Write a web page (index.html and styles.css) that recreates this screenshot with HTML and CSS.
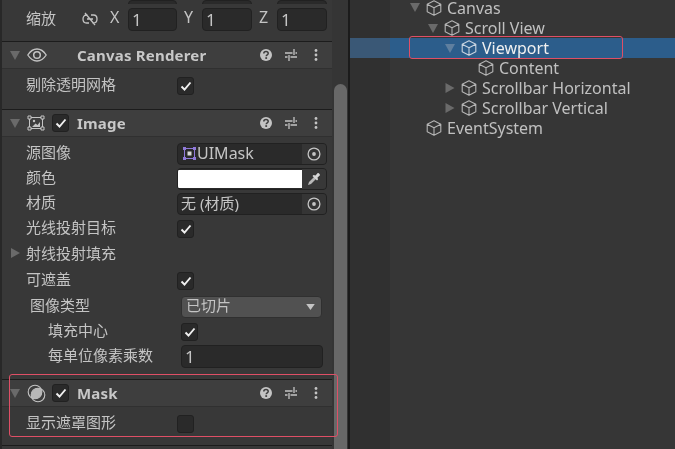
FILE: index.html
```html
<!DOCTYPE html>
<html lang="zh-CN">
<head>
<meta charset="utf-8">
<title>Inspector</title>
<link rel="stylesheet" href="styles.css">
</head>
<body>
<svg class="defs" width="0" height="0" aria-hidden="true">
  <symbol id="cube" viewBox="0 0 16 16"><path d="M8 .8 14.800 4.200V11.800L8 15.200 1.200 11.800V4.200ZM1.200 4.200 8 7.800 14.800 4.200M8 7.800V15.200" fill="none" stroke="currentColor" stroke-width="1.100" stroke-linejoin="round"/></symbol>
  <symbol id="check" viewBox="0 0 12 12"><path d="M1.500 6.500 4.500 9.500 10.500 2.500" fill="none" stroke="#f0f0f0" stroke-width="1.900"/></symbol>
  <symbol id="help" viewBox="0 0 12 12"><circle cx="6" cy="6" r="6" fill="#c4c4c4"/><path d="M3.800 4.600C3.800 3.300 4.800 2.600 6 2.600 7.300 2.600 8.200 3.400 8.200 4.400 8.200 5.900 6.200 5.900 6.200 7.300" fill="none" stroke="#3e3e3e" stroke-width="1.500"/><rect x="5.300" y="8.200" width="1.800" height="1.700" fill="#3e3e3e"/></symbol>
  <symbol id="sliders" viewBox="0 0 12 12"><path d="M0 4H7.500M10.500 4H12M0 8H2.500M5.500 8H12M9 0V6M4 6V12" fill="none" stroke="#c4c4c4" stroke-width="1.300"/></symbol>
  <symbol id="dots" viewBox="0 0 4 12"><circle cx="2" cy="1.500" r="1.400" fill="#c4c4c4"/><circle cx="2" cy="6" r="1.400" fill="#c4c4c4"/><circle cx="2" cy="10.500" r="1.400" fill="#c4c4c4"/></symbol>
  <symbol id="target" viewBox="0 0 14 14"><circle cx="7" cy="7" r="5.900" fill="none" stroke="#c4c4c4" stroke-width="1.300"/><circle cx="7" cy="7" r="1.900" fill="#c4c4c4"/></symbol>
</svg>

<div class="app">
  <main class="inspector">
    <div class="xyz-row xyz-top">
      <span></span><span></span><span></span><div class="field"></div><span></span><div class="field"></div><span></span><div class="field"></div>
    </div>
    <div class="xyz-row xyz-scale">
      <span class="label">缩放</span>
      <svg class="link" width="16" height="14" viewBox="0 0 16 14"><path d="M5.500 3H4.500C2.500 3 1 4.500 1 7S2.500 11 4.500 11H7M9 3H11.500C13.500 3 15 4.500 15 7S13.500 11 11.500 11H10.500M5 7H11M3 1 13 13" fill="none" stroke="#c4c4c4" stroke-width="1.300"/></svg>
      <span class="axis">X</span><div class="field">1</div>
      <span class="axis axis-gap">Y</span><div class="field">1</div>
      <span class="axis axis-gap">Z</span><div class="field">1</div>
    </div>

    <section class="component comp-canvas">
      <header class="comp-head">
        <svg class="tri" width="10" height="9" viewBox="0 0 10 9"><path d="M0 0H10L5 9Z" fill="#6a6a6a"/></svg>
        <svg class="comp-icon" width="20" height="14" viewBox="0 0 20 14"><path d="M.8 7C3.500 2.800 6.500 1 10 1S16.500 2.800 19.200 7C16.500 11.200 13.500 13 10 13S3.500 11.200 .8 7Z" fill="none" stroke="#c4c4c4" stroke-width="1.300"/><circle cx="10" cy="7" r="3.300" fill="none" stroke="#c4c4c4" stroke-width="1.500"/></svg>
        <span></span>
        <strong class="comp-title">Canvas Renderer</strong>
        <svg class="act" width="12" height="12"><use href="#help"/></svg>
        <svg class="act" width="12" height="12"><use href="#sliders"/></svg>
        <svg class="act act-dots" width="4" height="12"><use href="#dots"/></svg>
      </header>
      <div class="comp-body">
        <div class="row"><span class="label">剔除透明网格</span><span class="cb on"><svg width="12" height="12"><use href="#check"/></svg></span></div>
      </div>
    </section>

    <section class="component comp-image">
      <header class="comp-head">
        <svg class="tri" width="10" height="9" viewBox="0 0 10 9"><path d="M0 0H10L5 9Z" fill="#6a6a6a"/></svg>
        <svg class="comp-icon" width="18" height="16" viewBox="0 0 18 16"><path d="M2.500 2.500H15.500V13.500H2.500Z" fill="none" stroke="#c4c4c4"/><path d="M1 1H4V4H1ZM14 1H17V4H14ZM1 12H4V15H1ZM14 12H17V15H14Z" fill="#3e3e3e" stroke="#c4c4c4"/><path d="M5 12 8.500 8.500 10.500 10 13 7V12Z" fill="#c4c4c4"/><circle cx="7" cy="6" r="1.200" fill="#c4c4c4"/></svg>
        <span class="cb on"><svg width="12" height="12"><use href="#check"/></svg></span>
        <strong class="comp-title">Image</strong>
        <svg class="act" width="12" height="12"><use href="#help"/></svg>
        <svg class="act" width="12" height="12"><use href="#sliders"/></svg>
        <svg class="act act-dots" width="4" height="12"><use href="#dots"/></svg>
      </header>
      <div class="comp-body">
        <div class="row">
          <span class="label">源图像</span>
          <div class="objfield">
            <svg class="sprite" width="13" height="13" viewBox="0 0 13 13"><path d="M1.500 1.500H11.500V11.500H1.500Z" fill="none" stroke="#8f79d8"/><path d="M0 0H3V3H0ZM10 0H13V3H10ZM0 10H3V13H0ZM10 10H13V13H10Z" fill="#8f79d8"/><rect x="4.500" y="4.500" width="4" height="4" fill="#d8d8d8"/></svg>
            <span class="objtext">UIMask</span>
            <span class="objbtn"><svg width="14" height="14"><use href="#target"/></svg></span>
          </div>
        </div>
        <div class="row">
          <span class="label">颜色</span>
          <div class="colorfield">
            <span class="swatch"></span>
            <span class="dropper"><svg width="14" height="14" viewBox="0 0 14 14"><path d="M1 13 2 10 7.500 4.500 9.500 6.500 4 12Z" fill="#b8b8b8"/><path d="M6.500 3 8.500 3.500 10.500 1.200C11.500.4 13.600 2.500 12.800 3.500L10.500 5.500 11 7.500 10 8.500 5.500 4Z" fill="#d8d8d8"/></svg></span>
          </div>
        </div>
        <div class="row">
          <span class="label">材质</span>
          <div class="objfield">
            <span class="objtext objtext-plain">无 (材质)</span>
            <span class="objbtn"><svg width="14" height="14"><use href="#target"/></svg></span>
          </div>
        </div>
        <div class="row"><span class="label">光线投射目标</span><span class="cb on"><svg width="12" height="12"><use href="#check"/></svg></span></div>
        <div class="row row-tall">
          <span class="label label-fold"><svg class="fold" width="9" height="10" viewBox="0 0 9 10"><path d="M0 0 9 5 0 10Z" fill="#6a6a6a"/></svg>射线投射填充</span>
        </div>
        <div class="row row-taller"><span class="label">可遮盖</span><span class="cb on"><svg width="12" height="12"><use href="#check"/></svg></span></div>
        <div class="row row-sub">
          <span class="label">图像类型</span>
          <div class="dropdown"><span class="dropdown-text">已切片</span><svg width="9" height="6" viewBox="0 0 10 7"><path d="M0 0H10L5 7Z" fill="#c4c4c4"/></svg></div>
        </div>
        <div class="row row-sub2"><span class="label">填充中心</span><span class="cb on"><svg width="12" height="12"><use href="#check"/></svg></span></div>
        <div class="row row-sub2"><span class="label">每单位像素乘数</span><div class="field field-wide">1</div></div>
      </div>
    </section>

    <section class="component comp-mask">
      <header class="comp-head">
        <svg class="tri" width="10" height="9" viewBox="0 0 10 9"><path d="M0 0H10L5 9Z" fill="#6a6a6a"/></svg>
        <svg class="comp-icon" width="19" height="19" viewBox="0 0 19 19"><circle cx="8" cy="8" r="6.800" fill="none" stroke="#c4c4c4" stroke-width="1.100"/><circle cx="11" cy="11" r="6.800" fill="none" stroke="#c4c4c4" stroke-width="1.100"/><path d="M14.070 4.930A6.800 6.800 0 0 1 4.930 14.070 6.800 6.800 0 0 1 14.070 4.930Z" fill="#b8b8b8"/></svg>
        <span class="cb on"><svg width="12" height="12"><use href="#check"/></svg></span>
        <strong class="comp-title">Mask</strong>
        <svg class="act" width="12" height="12"><use href="#help"/></svg>
        <svg class="act" width="12" height="12"><use href="#sliders"/></svg>
        <svg class="act act-dots" width="4" height="12"><use href="#dots"/></svg>
      </header>
      <div class="comp-body">
        <div class="row"><span class="label">显示遮罩图形</span><span class="cb"></span></div>
      </div>
    </section>
    <div class="mark mark-mask"></div>
  </main>

  <aside class="scrollbar"><div class="thumb"></div></aside>

  <nav class="hierarchy">
    <div class="node d0 first"><svg class="exp" width="10" height="9" viewBox="0 0 10 9"><path d="M0 0H10L5 9Z" fill="#6a6a6a"/></svg><svg class="cube" width="16" height="16"><use href="#cube"/></svg><span>Canvas</span></div>
    <div class="node d1"><svg class="exp" width="10" height="9" viewBox="0 0 10 9"><path d="M0 0H10L5 9Z" fill="#6a6a6a"/></svg><svg class="cube" width="16" height="16"><use href="#cube"/></svg><span>Scroll View</span></div>
    <div class="node d2 selected"><svg class="exp" width="10" height="9" viewBox="0 0 10 9"><path d="M0 0H10L5 9Z" fill="#5f7f9f"/></svg><svg class="cube" width="16" height="16"><use href="#cube"/></svg><span>Viewport</span></div>
    <div class="node d3"><span class="exp"></span><svg class="cube" width="16" height="16"><use href="#cube"/></svg><span>Content</span></div>
    <div class="node d2"><svg class="exp" width="9" height="10" viewBox="0 0 9 10"><path d="M0 0 9 5 0 10Z" fill="#6a6a6a"/></svg><svg class="cube" width="16" height="16"><use href="#cube"/></svg><span>Scrollbar Horizontal</span></div>
    <div class="node d2"><svg class="exp" width="9" height="10" viewBox="0 0 9 10"><path d="M0 0 9 5 0 10Z" fill="#6a6a6a"/></svg><svg class="cube" width="16" height="16"><use href="#cube"/></svg><span>Scrollbar Vertical</span></div>
    <div class="node d0"><span class="exp"></span><svg class="cube" width="16" height="16"><use href="#cube"/></svg><span>EventSystem</span></div>
    <div class="mark mark-viewport"></div>
  </nav>
</div>
</body>
</html>
```

FILE: styles.css
```css
* { box-sizing: border-box; }
html, body { margin: 0; padding: 0; height: 100%; overflow: hidden; }
body {
  background: #383838;
  color: #c4c4c4;
  font-family: "Noto Sans", "Noto Sans CJK SC", sans-serif;
  font-size: 15px;
}
.defs { position: absolute; }

.app { display: flex; width: 675px; height: 449px; overflow: hidden; filter: blur(.3px); }

/* Inspector */
.inspector {
  position: relative;
  width: 332px;
  height: 449px;
  border-left: 2px solid #282828;
  background: #383838;
  flex: none;
}
.xyz-row {
  display: grid;
  grid-template-columns: 56px 28px 18px 49px 25px 50px 25px 50px;
  padding-left: 24px;
  align-items: center;
}
.xyz-top { height: 4px; overflow: hidden; align-items: end; }
.xyz-top .field { height: 23px; }
.xyz-scale { height: 23px; margin-top: 3px; margin-bottom: 11px; }
.axis { font-size: 16px; line-height: 20px; margin-bottom: 4px; }
.axis-gap { padding-left: 7px; }
.link { display: block; }
.label { white-space: nowrap; line-height: 20px; margin-bottom: 3px; }
.field {
  height: 23px;
  background: #2a2a2a;
  border: 1px solid #212121;
  border-radius: 4px;
  padding-left: 3px;
  font-size: 17px;
  line-height: 22px;
  color: #c4c4c4;
}
.field-wide { width: 142px; }

.component { border-top: 1px solid #1c1c1c; }
.comp-head {
  display: grid;
  grid-template-columns: 17px 25px 25px 1fr 25px 25px 22px;
  align-items: center;
  height: 27px;
  padding-left: 8px;
  background: #3e3e3e;
  border-bottom: 1px solid #303030;
}
.comp-title { color: #c8c8c8; font-weight: 700; font-size: 15px; letter-spacing: .2px; }
.act-dots { margin-left: 4px; }
.comp-canvas .comp-body { padding: 4px 0 11px; }
.comp-image .comp-body { padding: 4px 0 10px; }
.comp-mask { border-bottom: 1px solid #1c1c1c; }
.comp-mask .comp-body { padding: 4px 0 9px; }

.row {
  display: grid;
  grid-template-columns: 151px 150px;
  align-items: center;
  height: 25px;
  padding-left: 24px;
}
.row-tall { height: 26px; }
.row-taller { height: 27px; }
.row-sub { grid-template-columns: 151px 141px; padding-left: 28px; }
.row-sub2 { grid-template-columns: 133px 142px; padding-left: 46px; }
.label-fold { display: flex; align-items: center; margin-left: -15px; }
.fold { margin-right: 6px; }

.cb {
  display: flex;
  align-items: center;
  justify-content: center;
  width: 17px;
  height: 18px;
  background: #2a2a2a;
  border: 1px solid #212121;
  border-radius: 3px;
}

.objfield, .colorfield {
  display: flex;
  align-items: stretch;
  height: 22px;
  width: 150px;
  background: #2a2a2a;
  border: 1px solid #212121;
  border-radius: 4px;
  overflow: hidden;
}
.sprite { align-self: center; margin-left: 5px; flex: none; }
.objtext { flex: 1; padding-left: 1px; font-size: 16px; line-height: 19px; white-space: nowrap; }
.objtext-plain { padding-left: 3px; font-size: 15px; }
.objbtn, .dropper {
  display: flex;
  align-items: center;
  justify-content: center;
  width: 24px;
  flex: none;
  background: #353535;
}
.swatch { flex: 1; background: #fff; margin: 1px 0; }
.dropper { background: #383838; }

.dropdown {
  display: flex;
  align-items: center;
  justify-content: space-between;
  height: 22px;
  padding: 0 6px 0 4px;
  background: #515151;
  border: 1px solid #303030;
  border-radius: 4px;
}
.dropdown-text { line-height: 17px; margin-bottom: 3px; }

/* annotations */
.mark {
  position: absolute;
  border: 1.500px solid #df4f66;
  border-radius: 3px;
}
.mark-mask { left: 7px; top: 374px; width: 329px; height: 63px; }
.mark-viewport { left: 59px; top: 36px; width: 214px; height: 23px; }

/* Scrollbar */
.scrollbar {
  flex: none;
  width: 18px;
  height: 449px;
  background: #353535;
  border-right: 2px solid #1b1b1b;
  padding: 84px 1px 0 2px;
}
.thumb { height: 365px; background: #686868; border-radius: 7px 7px 0 0; }

/* Hierarchy */
.hierarchy {
  position: relative;
  flex: 1;
  height: 449px;
  background: linear-gradient(to right, #303030 40px, #363636 40px);
}
.node {
  display: flex;
  align-items: center;
  height: 20px;
  white-space: nowrap;
  color: #c0c0c0;
  font-size: 16px;
  line-height: 20px;
}
.node.first { height: 18px; align-items: flex-start; line-height: 16px; }
.node.first .exp { margin-top: 3px; }
.node .exp { flex: none; width: 10px; margin-right: 6px; }
.node .cube { flex: none; margin-right: 5px; color: #b4b4b4; }
.d0 { padding-left: 60px; }
.d1 { padding-left: 78px; }
.d2 { padding-left: 95px; }
.d3 { padding-left: 112px; }
.selected {
  background: linear-gradient(to right, #3a5876 40px, #2c5d8b 40px);
  color: #f0f0f0;
}
.selected .cube { color: #c8d4e0; }
```
